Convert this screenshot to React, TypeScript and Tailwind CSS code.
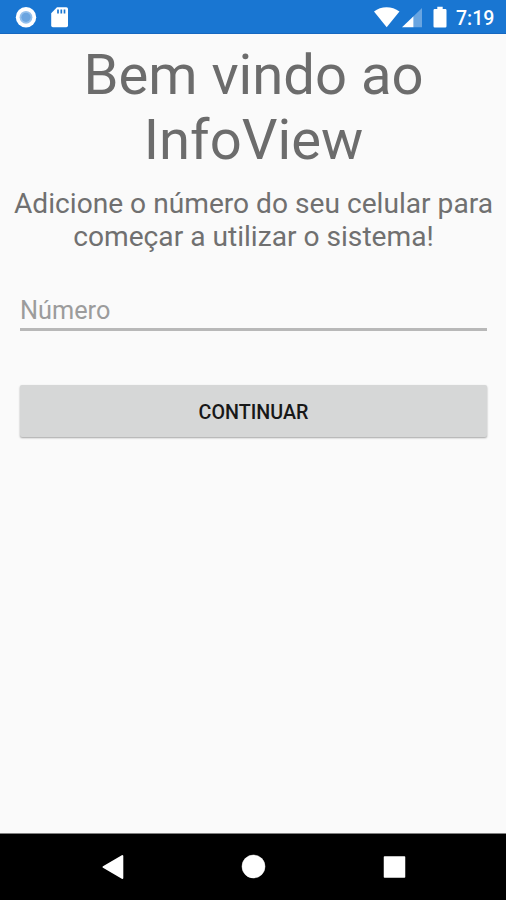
/**
 * StatusBar コンポーネント
 */
const StatusBar = () => {
  return (
    <div className="flex h-[34px] shrink-0 items-center justify-between border-b border-[#1668c0] bg-[#1976d2] text-white">
      <svg className="h-[34px] w-[80px] shrink-0" viewBox="0 0 80 34" fill="none">
        <circle cx="26" cy="17.3" r="10.2" fill="#fff" />
        <circle cx="26" cy="17.3" r="6.4" fill="#94c0ec" />
        <circle cx="26" cy="17.3" r="4.6" fill="#6ba5e0" />
        <path d="M57 7.300h9.300q1.700 0 1.700 1.700v16.500q0 1.700-1.700 1.700H52.900q-1.700 0-1.700-1.700V13.200z" fill="#fff" />
        <path d="M58 9.500v4M61.300 9.500v4M64.500 9.500v4" stroke="#1976d2" strokeWidth="1.700" />
      </svg>
      <div className="flex items-center">
        <svg className="h-[34px] w-[84px] shrink-0" viewBox="370 0 84 34" fill="#fff">
          <path d="M374 11.500C381 5.700 392 5.700 399.500 11.500L386.700 27.300z" />
          <path d="M422 8v19.300h-8.500V16.300z" fillOpacity="0.35" />
          <path d="M413.500 16.300v11h-11.500z" />
          <path d="M437.300 6.800h5.400v2.200h2.600q1.200 0 1.200 1.200v16q0 1.200-1.200 1.200h-10.600q-1.200 0-1.200-1.200v-16q0-1.200 1.200-1.200h2.600z" />
        </svg>
        <span className="w-[52px] pt-[4px] pl-[2px] text-[19.5px] leading-[24px] font-medium">7:19</span>
      </div>
    </div>
  );
};

/**
 * NavigationBar コンポーネント
 */
const NavigationBar = () => {
  return (
    <div className="h-[67px] shrink-0 border-t border-[#808080] bg-black">
      <svg className="h-[66px] w-[506px]" viewBox="0 834 506 66" fill="#fff" stroke="#fff" strokeLinejoin="round">
        <path d="M103.500 867l18.800-11v22z" strokeWidth="2" />
        <circle cx="253.500" cy="866.500" r="11.500" strokeWidth="0.500" />
        <rect x="384.500" y="857" width="20" height="20" strokeWidth="1.500" />
      </svg>
    </div>
  );
};

const App = () => {
  return (
    <div className="flex h-[900px] w-[506px] flex-col overflow-hidden bg-[#fafafa] font-['Roboto',sans-serif]">
      <StatusBar />
      <main className="flex flex-1 flex-col pt-[9px] pl-px">
        <h1 className="text-center text-[56.2px] leading-[65px] text-[#6c6c6c]">
          Bem vindo ao
          <br />
          InfoView
        </h1>
        <p className="mt-[14px] text-center text-[28.150px] leading-[33px] whitespace-nowrap text-[#707070]">
          Adicione o número do seu celular para
          <br />
          começar a utilizar o sistema!
        </p>
        <input
          className="mx-[19px] mt-[39px] h-[39px] border-b-[3px] border-[#b8b8b8] bg-transparent text-[25.3px] outline-none placeholder:text-[#9c9c9c]"
          placeholder="Número"
        />
        <button className="mx-[19px] mt-[54px] h-[52px] rounded-[2px] bg-[#d6d7d7] pt-[3px] text-[19.700px] font-medium text-[#181818] shadow-[0_1px_2px_rgba(0,0,0,0.35)]">
          CONTINUAR
        </button>
      </main>
      <NavigationBar />
    </div>
  );
};

export default App;
